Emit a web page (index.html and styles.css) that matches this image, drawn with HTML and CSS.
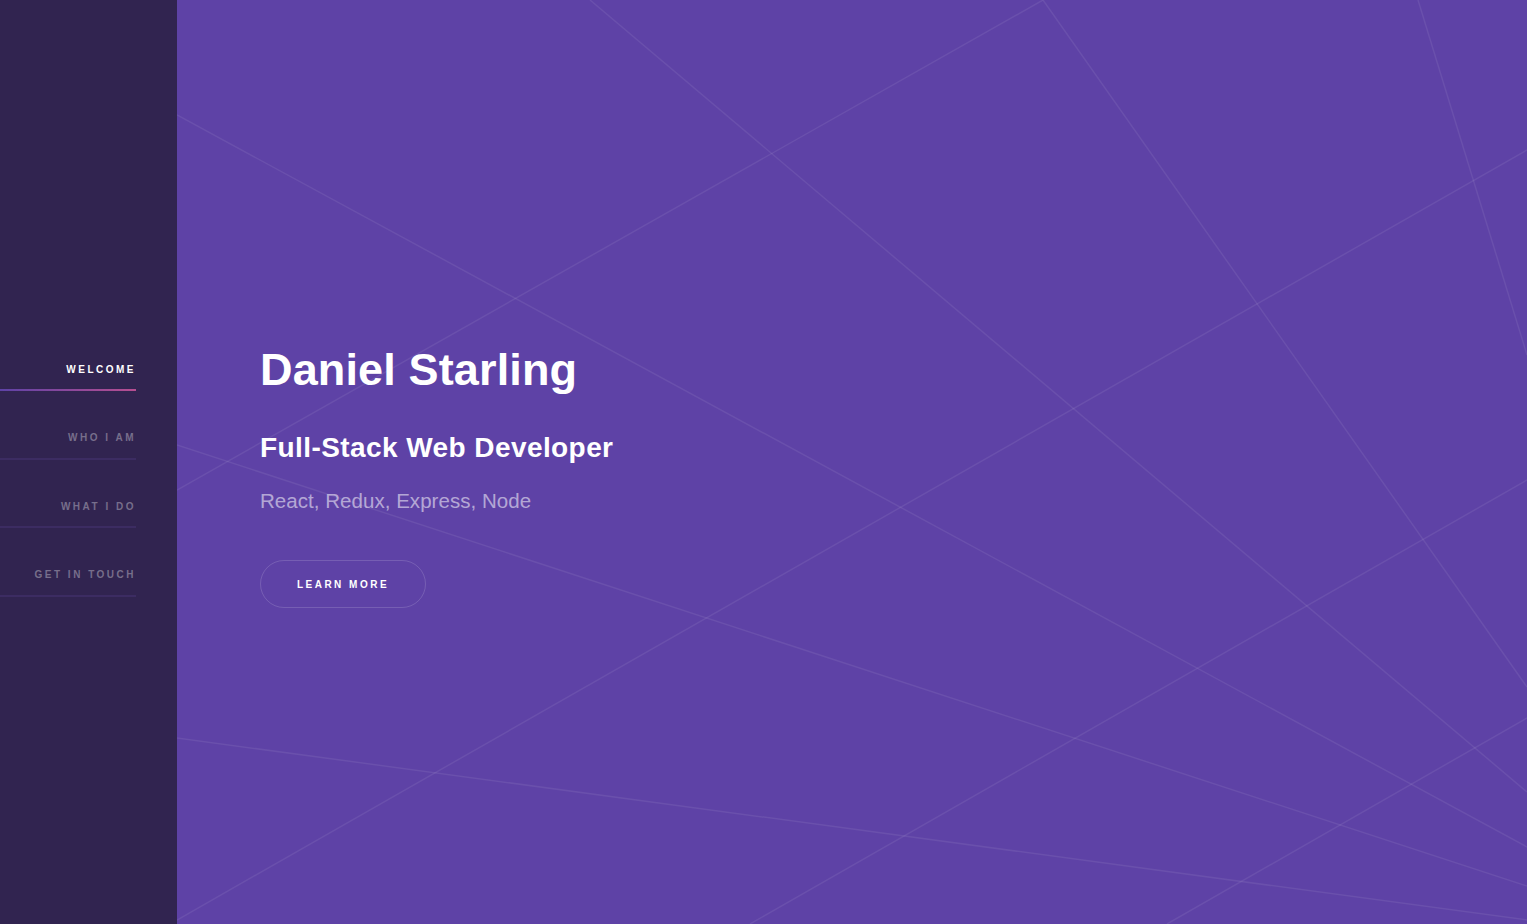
FILE: index.html
```html
<!DOCTYPE html>
<html lang="en">
<head>
<meta charset="utf-8">
<title>Daniel Starling</title>
<link rel="stylesheet" href="styles.css">
</head>
<body>
<div class="page">
  <aside class="sidebar">
    <nav class="nav">
      <a class="nav-link active" href="#intro">Welcome</a>
      <a class="nav-link" href="#one">Who I Am</a>
      <a class="nav-link" href="#two">What I Do</a>
      <a class="nav-link" href="#three">Get in Touch</a>
    </nav>
  </aside>
  <main class="intro">
    <svg class="intro-lines" viewBox="0 0 1350 924" preserveAspectRatio="none" aria-hidden="true">
      <g stroke="rgba(255,255,255,0.075)" stroke-width="1.5" fill="none">
        <line x1="0" y1="115" x2="1350" y2="847"/>
        <line x1="413" y1="0" x2="1350" y2="792"/>
        <line x1="866" y1="0" x2="1350" y2="687"/>
        <line x1="1241" y1="0" x2="1350" y2="355"/>
        <line x1="0" y1="490" x2="866" y2="0"/>
        <line x1="0" y1="445" x2="1350" y2="886"/>
        <line x1="0" y1="738" x2="1350" y2="920"/>
        <line x1="0" y1="920" x2="1350" y2="150"/>
        <line x1="573" y1="924" x2="1350" y2="480"/>
        <line x1="990" y1="924" x2="1350" y2="718"/>
      </g>
    </svg>
    <div class="intro-inner">
      <h1 class="title">Daniel Starling</h1>
      <h2 class="subtitle">Full-Stack Web Developer</h2>
      <p class="stack">React, Redux, Express, Node</p>
      <a class="button" href="#one">Learn More</a>
    </div>
  </main>
</div>
</body>
</html>
```

FILE: styles.css
```css
* {
  box-sizing: border-box;
}

html, body {
  margin: 0;
  padding: 0;
  height: 100%;
}

body {
  font-family: "Liberation Sans", Arial, sans-serif;
  background: #312450;
  color: #ffffff;
  overflow: hidden;
}

.page {
  display: flex;
  height: 100vh;
}

.sidebar {
  flex: 0 0 177px;
  width: 177px;
  background: #312450;
  padding-top: 322.4px;
}

.nav {
  display: flex;
  flex-direction: column;
  width: 136px;
}

.nav-link {
  position: relative;
  display: block;
  padding: 42.3px 0 16.3px 0;
  text-align: right;
  font-size: 10px;
  line-height: 10px;
  font-weight: bold;
  letter-spacing: 2.5px;
  text-transform: uppercase;
  text-decoration: none;
  color: rgba(255, 255, 255, 0.35);
}

.nav-link::after {
  content: "";
  position: absolute;
  left: 0;
  right: 0;
  bottom: 0;
  height: 2px;
  background: #3c2c62;
}

.nav-link.active {
  color: #ffffff;
}

.nav-link.active::after {
  background: linear-gradient(to right, #5e42a6, #b74e91);
}

.intro {
  position: relative;
  flex: 1 1 auto;
  background: #5e42a6;
  overflow: hidden;
}

.intro-lines {
  position: absolute;
  left: 0;
  top: 0;
  width: 100%;
  height: 100%;
}

.intro-inner {
  position: relative;
  display: flex;
  flex-direction: column;
  align-items: flex-start;
  padding: 347px 0 0 83px;
}

.title {
  margin: 0;
  font-size: 45px;
  line-height: 45px;
  font-weight: bold;
  letter-spacing: 0.14px;
  color: #ffffff;
}

.subtitle {
  margin: 41.5px 0 0 0;
  font-size: 28px;
  line-height: 28px;
  font-weight: bold;
  letter-spacing: 0.42px;
  color: #ffffff;
}

.stack {
  margin: 29.2px 0 0 0;
  font-size: 20.5px;
  line-height: 20.5px;
  letter-spacing: 0.04px;
  color: rgba(255, 255, 255, 0.55);
}

.button {
  display: inline-block;
  margin-top: 48.8px;
  width: 166px;
  height: 48px;
  border: 1px solid rgba(255, 255, 255, 0.15);
  border-radius: 24px;
  text-align: center;
  padding-top: 2px;
  font-size: 10px;
  line-height: 44px;
  font-weight: bold;
  letter-spacing: 2.5px;
  text-transform: uppercase;
  text-decoration: none;
  color: #ffffff;
}
```
